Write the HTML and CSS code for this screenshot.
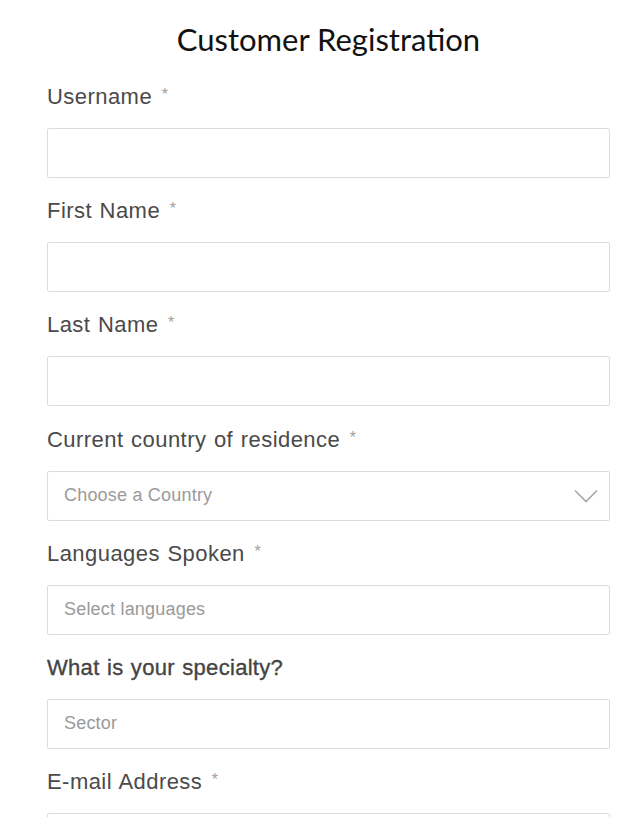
FILE: index.html
```html
<!DOCTYPE html>
<html lang="en">
<head>
<meta charset="utf-8">
<title>Customer Registration</title>
<link rel="stylesheet" href="styles.css">
</head>
<body>
<main class="page">
  <h1 class="title">Customer Registration</h1>
  <form class="form">
    <div class="field">
      <label class="label">Username <span class="req">*</span></label>
      <div class="input"></div>
    </div>
    <div class="field">
      <label class="label">First Name <span class="req">*</span></label>
      <div class="input"></div>
    </div>
    <div class="field">
      <label class="label">Last Name <span class="req">*</span></label>
      <div class="input"></div>
    </div>
    <div class="field">
      <label class="label">Current country of residence <span class="req">*</span></label>
      <div class="input select">
        <span class="placeholder">Choose a Country</span>
        <svg class="chevron" width="24" height="14" viewBox="0 0 24 14"><path d="M1 1.5 L12 12.5 L23 1.5" fill="none" stroke="#a3a7ab" stroke-width="1.6"/></svg>
      </div>
    </div>
    <div class="field">
      <label class="label">Languages Spoken <span class="req">*</span></label>
      <div class="input"><span class="placeholder">Select languages</span></div>
    </div>
    <div class="field">
      <label class="label strong">What is your specialty?</label>
      <div class="input"><span class="placeholder">Sector</span></div>
    </div>
    <div class="field">
      <label class="label">E-mail Address <span class="req">*</span></label>
      <div class="input"></div>
    </div>
  </form>
</main>
</body>
</html>
```
FILE: styles.css
```css
* { box-sizing: border-box; }
html, body { margin: 0; padding: 0; background: #fff; }
body { font-family: "Liberation Sans", Arial, sans-serif; overflow: hidden; }
.page { padding: 0 21px 0 47px; }
.title {
  margin: 0;
  padding-top: 19px;
  height: 60px;
  line-height: 40px;
  text-align: center;
  font-family: "Lato", "Inter", sans-serif;
  font-weight: 400;
  font-size: 31px;
  color: #111;
}
.form { display: flex; flex-direction: column; margin-top: 22px; }
.field { display: flex; flex-direction: column; margin-bottom: 18.2px; }
.label {
  display: block;
  height: 30px;
  font-size: 22px;
  line-height: 30px;
  letter-spacing: 0.45px;
  word-spacing: 1px;
  color: #4a4a4a;
  margin-bottom: 16px;
}
.label.strong { color: #444; -webkit-text-stroke: 0.35px #444; letter-spacing: 0.3px; }
.req { color: #a0a0a0; font-size: 16px; position: relative; top: -4px; margin-left: 2px; }
.input {
  height: 50px;
  border: 1px solid #dcdcdc;
  border-radius: 2px;
  display: flex;
  align-items: center;
  padding: 0 11px 0 16px;
}
.select { justify-content: space-between; }
.placeholder { color: #9a9a9a; font-size: 18px; letter-spacing: 0.2px; }
.chevron { display: block; }
```
